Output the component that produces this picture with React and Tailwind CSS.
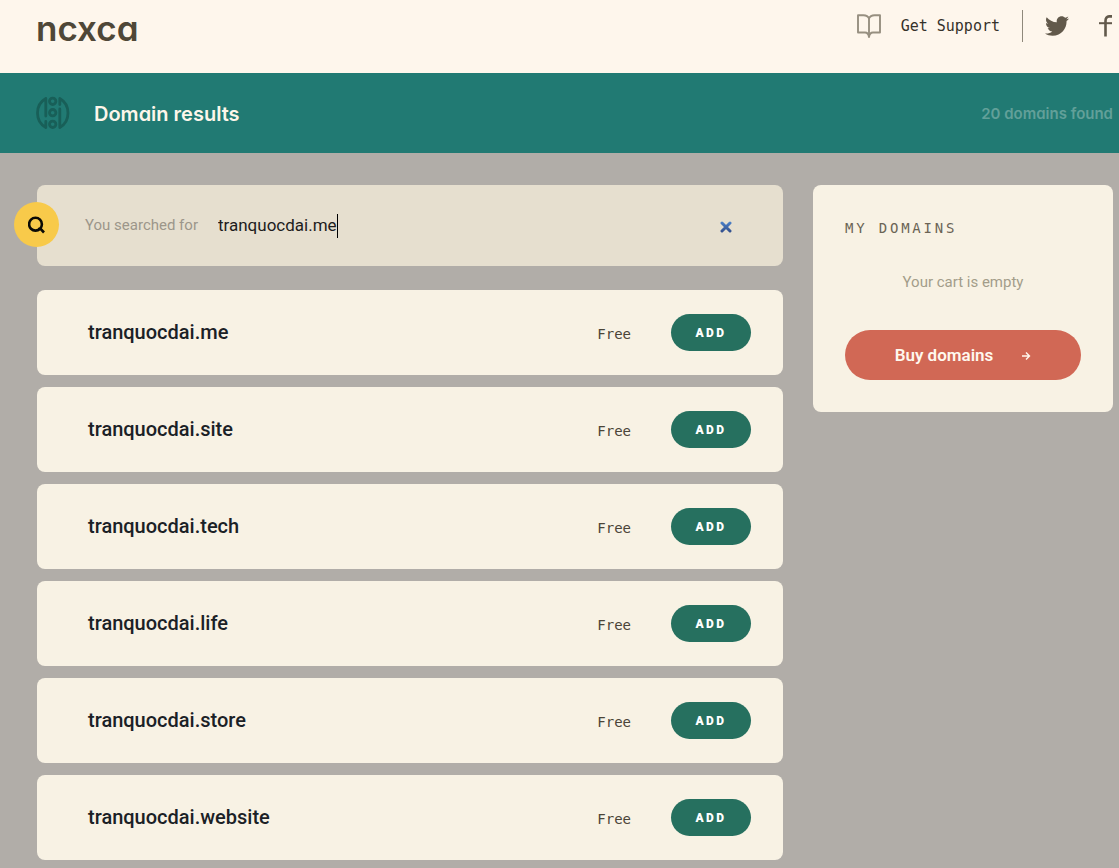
import { useState } from "react";
import { FaTwitter } from "react-icons/fa";

const RESULTS = [
    { name: "tranquocdai.me", price: "Free" },
    { name: "tranquocdai.site", price: "Free" },
    { name: "tranquocdai.tech", price: "Free" },
    { name: "tranquocdai.life", price: "Free" },
    { name: "tranquocdai.store", price: "Free" },
    { name: "tranquocdai.website", price: "Free" },
];

const BookIcon = () => (
    <svg viewBox="0 0 24 24" className="w-6 h-6" fill="none" stroke="#978f80" strokeWidth="1.9" strokeLinejoin="round" strokeLinecap="round">
        <path d="M12 4.5C11 2 9 1.2 6.5 1.2H1V18.5H8C10 18.5 11.5 19.5 12 23C12.5 19.5 14 18.5 16 18.5H23V1.2H17.5C15 1.2 13 2 12 4.5Z" />
        <path d="M12 4.5V22" />
    </svg>
);

const FacebookIcon = () => (
    <svg viewBox="0 0 14 22" className="w-[14px] h-[22px]" fill="none" stroke="#62594b" strokeWidth="2.6">
        <path d="M6.5 21.5V6C6.5 3 8 1.4 10 1.4H13" />
        <path d="M0 8.2H13" strokeWidth="2" />
    </svg>
);

const GlobeIcon = () => (
    <svg viewBox="0 0 34 34" className="w-[34px] h-[34px]" fill="none" stroke="#185f58" strokeWidth="2.8" strokeLinecap="round" strokeLinejoin="round">
        <path d="M9.8 20V2.5C4.5 5.5 1.5 11 1.5 17S4.5 28.5 9.8 31.5V25.5" />
        <path d="M23.8 13V31.5C29 28.5 32 23 32 17S29 5.5 23.8 2.5V8.5" />
        <circle cx="16.7" cy="5.3" r="3.2" />
        <circle cx="16.7" cy="16.7" r="3.2" />
        <circle cx="16.7" cy="28.3" r="3.2" />
    </svg>
);

const SearchIcon = () => (
    <svg viewBox="0 0 18 18" className="w-[18px] h-[18px]" fill="none" stroke="#0a0a05" strokeWidth="2.6">
        <circle cx="7.5" cy="8.2" r="6.4" />
        <path d="M10 13H12.8L16 16.5" />
    </svg>
);

const ClearIcon = () => (
    <svg viewBox="0 0 12 12" className="w-3 h-3" fill="none" strokeWidth="3" strokeLinecap="round">
        <defs>
            <linearGradient id="clear" x1="0" y1="0" x2="0" y2="12" gradientUnits="userSpaceOnUse">
                <stop stopColor="#4f86cf" />
                <stop offset="1" stopColor="#304a86" />
            </linearGradient>
        </defs>
        <path d="M2 2L10 10M10 2L2 10" stroke="url(#clear)" />
    </svg>
);

const ArrowIcon = () => (
    <svg viewBox="0 0 10 10" className="w-[10px] h-[10px]" fill="none" stroke="currentColor" strokeWidth="1.4">
        <path d="M1 5H8.5M5 1.5L8.5 5L5 8.5" />
    </svg>
);

const Header = () => (
    <header className="flex justify-between bg-[#fef6ec] h-[73px] pl-9 pr-1.5 pt-2.5">
        <a href="#" className="font-['Inter',sans-serif] [font-feature-settings:'cv11'] font-semibold text-[35px] leading-9 text-[#4f4737]">
            ncxca
        </a>
        <nav className="flex items-center h-8">
            <a href="#" className="flex items-center gap-5 font-['DejaVu_Sans_Mono',monospace] text-[15px] text-[#35312a]">
                <BookIcon />
                Get Support
            </a>
            <span className="w-px h-8 bg-[#8f887b] mx-[22px]" />
            <a href="#" aria-label="Twitter" className="text-[#62594b]">
                <FaTwitter className="w-6 h-6" />
            </a>
            <a href="#" aria-label="Facebook" className="ml-[30px]">
                <FacebookIcon />
            </a>
        </nav>
    </header>
);

const SearchBar = () => {
    const [query, setQuery] = useState("tranquocdai.me");
    return (
        <form className="relative flex items-center bg-[#e6dfcf] rounded-lg h-[81px] pl-12 pr-[51px]" onSubmit={(e) => e.preventDefault()}>
            <button
                aria-label="Search"
                className="absolute -left-[23px] top-[17px] flex items-center justify-center w-[45px] h-[45px] rounded-full bg-[#f8ca4a]"
            >
                <SearchIcon />
            </button>
            <label htmlFor="query" className="text-[15px] text-[#9c968a] mr-5">
                You searched for
            </label>
            <input
                id="query"
                className="field-sizing-content text-[17px] text-[#1d1c1c] outline-none caret-transparent"
                value={query}
                onChange={(e) => setQuery(e.target.value)}
            />
            <span className="w-px h-6 bg-black" />
            <button type="button" aria-label="Clear" className="ml-auto pt-0.5" onClick={() => setQuery("")}>
                <ClearIcon />
            </button>
        </form>
    );
};

const DomainRow = ({ name, price }) => (
    <li className="flex items-center bg-[#f8f2e4] rounded-lg h-[85px] pl-[51px] pr-8">
        <span className="text-xl font-medium text-[#1b2126] pb-0.5 grow">{name}</span>
        <span className="font-['DejaVu_Sans_Mono',monospace] text-sm text-[#4b4538] mr-10 pt-0.5">{price}</span>
        <button className="w-20 h-[37px] rounded-full bg-[#26705f] hover:bg-[#1f5f50] text-white text-xs font-black tracking-[0.2em]">ADD</button>
    </li>
);

const Cart = () => (
    <aside className="w-[300px] shrink-0 bg-[#f8f2e4] rounded-lg p-8">
        <h2 className="font-['DejaVu_Sans_Mono',monospace] text-sm leading-[22px] tracking-[0.2em] text-[#6b6455]">MY DOMAINS</h2>
        <p className="text-[15px] leading-5 text-center text-[#a39d8a] mt-[33px]">Your cart is empty</p>
        <button className="flex items-center justify-center gap-7 w-full h-[50px] mt-[38px] pt-0.5 rounded-full bg-[#d16855] text-[#fff8ee] text-[17px] font-semibold">
            Buy domains
            <ArrowIcon />
        </button>
    </aside>
);

const App = () => (
    <div className="min-h-screen bg-[#b1ada8] font-['Roboto',sans-serif]">
        <Header />
        <div className="flex items-center bg-[#217a73] h-20 pl-9 pr-1.5">
            <GlobeIcon />
            <h1 className="font-['Inter',sans-serif] [font-feature-settings:'cv11'] font-semibold text-xl text-[#fdf6ea] ml-6 pt-0.5 grow">
                Domain results
            </h1>
            <p className="font-['Inter',sans-serif] [font-feature-settings:'cv11'] font-semibold text-[15px] text-[#62a099] pt-0.5">20 domains found</p>
        </div>
        <main className="flex items-start gap-[30px] pl-[37px] pr-1.5 pt-8 pb-2">
            <section className="grow">
                <SearchBar />
                <ul className="flex flex-col gap-3 mt-6">
                    {RESULTS.map((domain) => (
                        <DomainRow key={domain.name} {...domain} />
                    ))}
                </ul>
            </section>
            <Cart />
        </main>
    </div>
);

export default App;
